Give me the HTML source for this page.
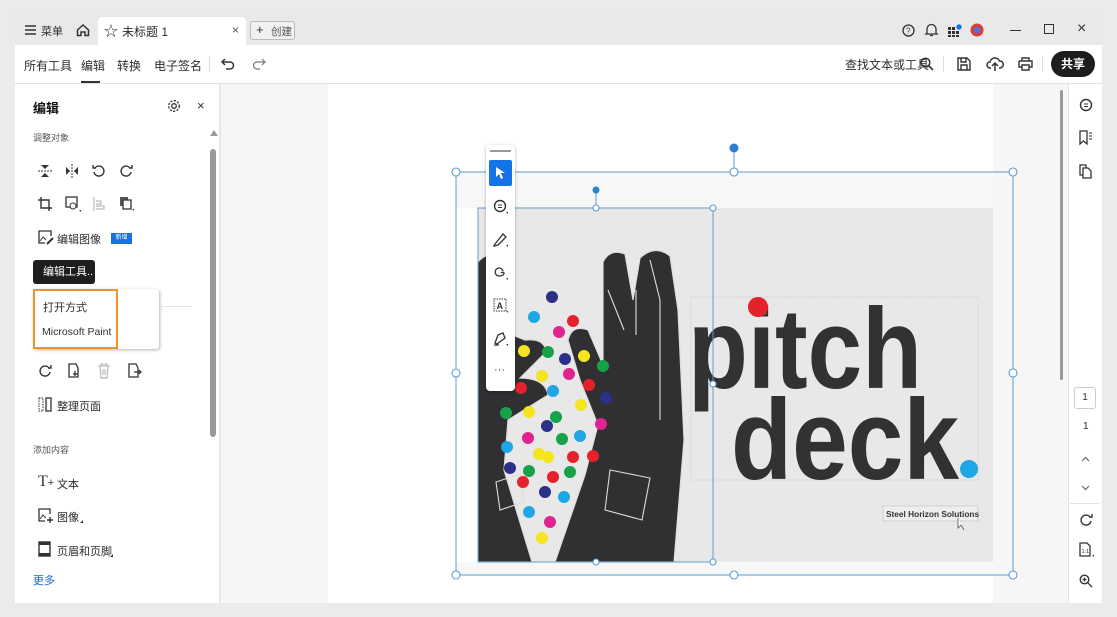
<!DOCTYPE html>
<html><head><meta charset="utf-8"><style>
*{margin:0;padding:0;box-sizing:border-box}
body{width:1117px;height:617px;background:#ebebeb;position:relative;overflow:hidden;font-family:"Liberation Sans","Noto Sans CJK SC",sans-serif;color:#222}
.a{position:absolute}
.t{font-size:11.5px;color:#2c2c2c;white-space:nowrap}
svg{position:absolute;overflow:visible}
</style></head><body>
<div class="a" style="left:15px;top:15px;width:1087px;height:30px;background:#e9e9e9"></div>
<div class="a" style="left:98px;top:17px;width:148px;height:28px;background:#fff;border-radius:4px 4px 0 0"></div>
<svg style="left:25px;top:25px" width="12" height="10"><path d="M0 1H11M0 5H11M0 9H11" stroke="#333" stroke-width="1.4"/></svg>
<div class="a t" style="left:41px;top:23px;font-size:11px">菜单</div>
<svg style="left:76px;top:23px" width="14" height="14"><path d="M1.5 7L7 2L12.5 7V12.5H9V9H5V12.5H1.5Z" fill="none" stroke="#333" stroke-width="1.5"/></svg>
<div class="a" style="left:104px;top:21px;font-size:14px;color:#333">☆</div>
<div class="a t" style="left:122px;top:23px;font-size:12px">未标题 1</div>
<div class="a t" style="left:232px;top:23px;font-size:12px;color:#555">×</div>
<div class="a" style="left:250px;top:21px;width:45px;height:19px;border:1px solid #bbb;border-radius:3px;background:#f1f1f1"></div>
<div class="a t" style="left:256px;top:22px;font-size:13px;color:#333">+</div>
<div class="a t" style="left:271px;top:24px;font-size:10.5px;color:#555">创建</div>
<svg style="left:902px;top:24px" width="13" height="13"><circle cx="6.5" cy="6.5" r="5.5" fill="none" stroke="#333" stroke-width="1.3"/><text x="4" y="9.5" font-size="8" font-family="Liberation Sans" fill="#333">?</text></svg>
<svg style="left:925px;top:23px" width="13" height="14"><path d="M2 10V6a4.5 4.5 0 0 1 9 0v4l1 1H1Z M5 12.5h3" fill="none" stroke="#333" stroke-width="1.3"/></svg>
<svg style="left:948px;top:24px" width="14" height="13"><g fill="#333"><rect x="0" y="3" width="3" height="3"/><rect x="4" y="3" width="3" height="3"/><rect x="0" y="7" width="3" height="3"/><rect x="4" y="7" width="3" height="3"/><rect x="8" y="7" width="3" height="3"/><rect x="0" y="11" width="3" height="2"/><rect x="4" y="11" width="3" height="2"/><rect x="8" y="11" width="3" height="2"/></g><circle cx="11" cy="3" r="2.7" fill="#1473e6"/></svg>
<svg style="left:970px;top:23px" width="14" height="14"><circle cx="7" cy="7" r="6.5" fill="#e03b2e"/><circle cx="7" cy="7" r="3.5" fill="#5a6fd6"/></svg>
<div class="a" style="left:1010px;top:30px;width:11px;height:1.3px;background:#333"></div>
<div class="a" style="left:1044px;top:24px;width:10px;height:10px;border:1.3px solid #333"></div>
<div class="a t" style="left:1077px;top:20px;font-size:16px;color:#333">×</div>
<div class="a" style="left:15px;top:45px;width:1087px;height:39px;background:#fff;border-bottom:1px solid #e2e2e2"></div>
<div class="a t" style="left:24px;top:57px;font-size:12px">所有工具</div>
<div class="a t" style="left:81px;top:57px;font-size:12px">编辑</div>
<div class="a" style="left:81px;top:81px;width:19px;height:2px;background:#333"></div>
<div class="a t" style="left:117px;top:57px;font-size:12px">转换</div>
<div class="a t" style="left:154px;top:57px;font-size:12px">电子签名</div>
<div class="a" style="left:209px;top:56px;width:1px;height:16px;background:#ddd"></div>
<svg style="left:221px;top:58px" width="14" height="11"><path d="M4 1L1 4L4 7M1 4H9a3.5 3.5 0 0 1 0 7H5" fill="none" stroke="#333" stroke-width="1.5"/></svg>
<svg style="left:252px;top:58px" width="14" height="11"><path d="M10 1L13 4L10 7M13 4H5a3.5 3.5 0 0 0 0 7H8" fill="none" stroke="#777" stroke-width="1.2"/></svg>
<div class="a t" style="left:845px;top:56px;font-size:12px">查找文本或工具</div>
<svg style="left:920px;top:57px" width="14" height="14"><circle cx="5.5" cy="5.5" r="4.3" fill="none" stroke="#333" stroke-width="1.5"/><path d="M8.7 8.7L13 13" stroke="#333" stroke-width="1.6"/></svg>
<div class="a" style="left:943px;top:56px;width:1px;height:16px;background:#ddd"></div>
<svg style="left:957px;top:57px" width="14" height="14"><path d="M1 1H10L13 4V13H1Z M4 1V5H9V1 M4 13V8H10V13" fill="none" stroke="#333" stroke-width="1.4"/></svg>
<svg style="left:987px;top:56px" width="16" height="16"><path d="M4 12H3a3 3 0 0 1 0-6a5 5 0 0 1 9.5-1a3.5 3.5 0 0 1 0.5 7H12 M8 15V7M5 10L8 7L11 10" fill="none" stroke="#333" stroke-width="1.5"/></svg>
<svg style="left:1018px;top:57px" width="15" height="14"><path d="M4 4V1H11V4 M1 4H14V10H11 M4 10H1V4 M4 8H11V13H4Z" fill="none" stroke="#333" stroke-width="1.4"/></svg>
<div class="a" style="left:1042px;top:56px;width:1px;height:16px;background:#ddd"></div>
<div class="a" style="left:1051px;top:51px;width:44px;height:26px;background:#1d1d1d;border-radius:13px;color:#fff;font-size:12px;font-weight:bold;text-align:center;line-height:26px">共享</div>
<div class="a" style="left:15px;top:84px;width:205px;height:519px;background:#fff;border-right:1px solid #e4e4e4"></div>
<div class="a t" style="left:33px;top:98px;font-size:13px;font-weight:bold;color:#111">编辑</div>
<svg style="left:167px;top:99px" width="14" height="14"><circle cx="7" cy="7" r="2.3" fill="none" stroke="#333" stroke-width="1.3"/><circle cx="7" cy="7" r="5.3" fill="none" stroke="#333" stroke-width="1.3" stroke-dasharray="2.2 1.3"/></svg>
<div class="a t" style="left:197px;top:98px;font-size:13px;color:#333">×</div>
<div class="a t" style="left:33px;top:131px;font-size:9px;color:#555">调整对象</div>
<div class="a" style="left:210px;top:130px;width:0;height:0;border-left:4px solid transparent;border-right:4px solid transparent;border-bottom:6px solid #999"></div>
<div class="a" style="left:210px;top:149px;width:6px;height:288px;background:#999;border-radius:3px"></div>
<svg style="left:38px;top:164px" width="14" height="14"><path d="M3 1H11L7 5Z M3 13H11L7 9Z" fill="#333"/><path d="M0 7H14" stroke="#333" stroke-dasharray="2 1"/></svg>
<svg style="left:65px;top:164px" width="14" height="14"><path d="M1 3V11L5 7Z M13 3V11L9 7Z" fill="#333"/><path d="M7 0V14" stroke="#333" stroke-dasharray="2 1"/></svg>
<svg style="left:92px;top:164px" width="14" height="14"><path d="M3 4A5 5 0 1 1 2 8 M1 1V4H4" fill="none" stroke="#333" stroke-width="1.4"/></svg>
<svg style="left:119px;top:164px" width="14" height="14"><path d="M11 4A5 5 0 1 0 12 8 M13 1V4H10" fill="none" stroke="#333" stroke-width="1.4"/></svg>
<svg style="left:38px;top:197px" width="14" height="14"><path d="M3 0V11H14 M0 3H11V14" fill="none" stroke="#333" stroke-width="1.4"/></svg>
<svg style="left:65px;top:196px" width="16" height="16"><rect x="1" y="1" width="11" height="10" fill="none" stroke="#333" stroke-width="1.3"/><circle cx="8" cy="10" r="3" fill="#fff" stroke="#333"/><path d="M14 14h2v2z" fill="#333"/></svg>
<svg style="left:93px;top:197px" width="16" height="16"><path d="M1 0V14 M3 4H8V7H3 M3 9H11V12H3" fill="none" stroke="#bbb" stroke-width="1.2"/></svg>
<svg style="left:119px;top:196px" width="16" height="16"><rect x="1" y="1" width="8" height="9" fill="#555"/><rect x="4" y="4" width="8" height="9" fill="#fff" stroke="#333" stroke-width="1.3"/><path d="M13 13h2v2z" fill="#333"/></svg>
<svg style="left:38px;top:230px" width="16" height="15"><path d="M13 6V1H1V13H7" fill="none" stroke="#333" stroke-width="1.3"/><path d="M2 11L5 7L8 10" fill="none" stroke="#333"/><path d="M9 14L15 8" stroke="#333" stroke-width="2"/></svg>
<div class="a t" style="left:57px;top:231px;font-size:11px">编辑图像</div>
<div class="a" style="left:111px;top:233px;width:21px;height:11px;background:#1473e6;color:#fff;font-size:6px;line-height:11px;text-align:center">新增</div>
<div class="a" style="left:33px;top:260px;width:62px;height:24px;background:#1e1e1e;border-radius:3px;color:#fff;font-size:11px;line-height:24px;padding-left:10px">编辑工具..</div>
<div class="a" style="left:33px;top:289px;width:126px;height:60px;background:#fff;border-radius:3px;box-shadow:1px 1px 3px rgba(0,0,0,.3)"></div>
<div class="a" style="left:33px;top:289px;width:85px;height:60px;border:2.5px solid #f0922b"></div>
<div class="a t" style="left:43px;top:299px;font-size:11px">打开方式</div>
<div class="a t" style="left:42px;top:326px;font-size:10.5px;color:#333">Microsoft Paint</div>
<div class="a" style="left:159px;top:306px;width:33px;height:1px;background:#e4e4e4"></div>
<svg style="left:38px;top:364px" width="14" height="14"><path d="M11 4A5 5 0 1 0 12 8 M13 1V4H10" fill="none" stroke="#333" stroke-width="1.4"/></svg>
<svg style="left:68px;top:363px" width="14" height="16"><path d="M8 1H1V14H10V5Z" fill="none" stroke="#333" stroke-width="1.3"/><path d="M7 8V13M5 11H10" stroke="#333" stroke-width="1.3"/></svg>
<svg style="left:97px;top:363px" width="14" height="16"><path d="M1 3H13M4 3V1H10V3M3 3L4 15H10L11 3M6 6V12M8 6V12" fill="none" stroke="#bbb" stroke-width="1.2"/></svg>
<svg style="left:128px;top:363px" width="14" height="16"><path d="M8 1H1V14H10V5Z" fill="none" stroke="#333" stroke-width="1.3"/><path d="M6 9H13M11 7L13 9L11 11" fill="none" stroke="#333" stroke-width="1.2"/></svg>
<svg style="left:38px;top:397px" width="14" height="15"><path d="M1 1H5V14H1Z" fill="none" stroke="#333" stroke-dasharray="1.5 1"/><rect x="8" y="1" width="5" height="13" fill="none" stroke="#333" stroke-width="1.3"/></svg>
<div class="a t" style="left:57px;top:398px;font-size:11px">整理页面</div>
<div class="a t" style="left:33px;top:443px;font-size:9px;color:#555">添加内容</div>
<div class="a t" style="left:38px;top:473px;font-size:16px;font-family:'Liberation Serif',serif;color:#333">T<span style="font-size:11px;font-family:'Liberation Sans'">+</span></div>
<div class="a t" style="left:57px;top:476px;font-size:11px">文本</div>
<svg style="left:38px;top:508px" width="16" height="16"><path d="M12 6V1H1V13H7" fill="none" stroke="#333" stroke-width="1.3"/><path d="M2 11L5 7L8 10" fill="none" stroke="#333"/><path d="M12 9V15M9 12H15" stroke="#333" stroke-width="1.4"/></svg>
<div class="a t" style="left:57px;top:509px;font-size:11px">图像</div>
<div class="a" style="left:80px;top:520px;border-left:3px solid transparent;border-bottom:3px solid #333"></div>
<svg style="left:38px;top:541px" width="13" height="16"><rect x="1" y="1" width="11" height="14" fill="none" stroke="#333" stroke-width="1.4"/><rect x="1" y="1" width="11" height="3" fill="#333"/><rect x="1" y="12" width="11" height="3" fill="#333"/></svg>
<div class="a t" style="left:57px;top:543px;font-size:11px">页眉和页脚</div>
<div class="a" style="left:110px;top:554px;border-left:3px solid transparent;border-bottom:3px solid #333"></div>
<div class="a t" style="left:33px;top:572px;font-size:11px;color:#1a63c9">更多</div>
<div class="a" style="left:221px;top:84px;width:107px;height:519px;background:#f6f6f6"></div>
<div class="a" style="left:328px;top:84px;width:665px;height:519px;background:#fff"></div>
<div class="a" style="left:993px;top:84px;width:75px;height:519px;background:#f6f6f6"></div>
<div class="a" style="left:1060px;top:90px;width:3px;height:290px;background:#999;border-radius:2px"></div>
<div class="a" style="left:1068px;top:84px;width:34px;height:519px;background:#fff;border-left:1px solid #e4e4e4"></div>
<div class="a" style="left:456px;top:172px;width:537px;height:36px;background:#f7f7f7"></div>
<div class="a" style="left:478px;top:208px;width:515px;height:354px;background:#e8e8e8"></div>
<div class="a" style="left:456px;top:562px;width:537px;height:13px;background:#f7f7f7"></div>
<svg style="left:0;top:0" width="1117" height="617">
<g fill="#303033" stroke="#ddd" stroke-width="1.2">
<path d="M555,562 L585,475 L598,425 L580,380 L568,340 Q572,324 588,330 L603,365 L603,262 Q610,248 625,254 L633,300 L640,258 Q655,244 670,256 L678,310 L684,440 L674,562 Z"/>
<path d="M478,262 Q488,250 495,262 L500,330 L525,340 Q545,338 546,352 L520,378 Q545,378 548,395 L508,420 L504,470 L532,562 L478,562 Z"/>
</g>
<g fill="none" stroke="#ddd" stroke-width="1.1">
<path d="M610,470 L650,478 L642,520 L605,510 Z M636,290 L636,335 M608,290 L624,330 M496,482 L520,474 L524,502 L500,510Z M650,260 L660,300 L660,420"/>
</g>
<g>
<circle cx="552" cy="297" r="6" fill="#2b3088"/><circle cx="534" cy="317" r="6" fill="#1ea7e4"/><circle cx="573" cy="321" r="6" fill="#e5212a"/><circle cx="559" cy="332" r="6" fill="#e0248f"/><circle cx="524" cy="351" r="6" fill="#f5e51f"/><circle cx="548" cy="352" r="6" fill="#17a24a"/><circle cx="565" cy="359" r="6" fill="#2b3088"/><circle cx="584" cy="356" r="6" fill="#f5e51f"/><circle cx="603" cy="366" r="6" fill="#17a24a"/><circle cx="542" cy="376" r="6" fill="#f5e51f"/><circle cx="569" cy="374" r="6" fill="#e0248f"/><circle cx="521" cy="388" r="6" fill="#e5212a"/><circle cx="553" cy="391" r="6" fill="#1ea7e4"/><circle cx="589" cy="385" r="6" fill="#e5212a"/><circle cx="606" cy="398" r="6" fill="#2b3088"/><circle cx="506" cy="413" r="6" fill="#17a24a"/><circle cx="529" cy="412" r="6" fill="#f5e51f"/><circle cx="556" cy="417" r="6" fill="#17a24a"/><circle cx="581" cy="405" r="6" fill="#f5e51f"/><circle cx="547" cy="426" r="6" fill="#2b3088"/><circle cx="601" cy="424" r="6" fill="#e0248f"/><circle cx="528" cy="438" r="6" fill="#e0248f"/><circle cx="562" cy="439" r="6" fill="#17a24a"/><circle cx="580" cy="436" r="6" fill="#1ea7e4"/><circle cx="507" cy="447" r="6" fill="#1ea7e4"/><circle cx="539" cy="454" r="6" fill="#f5e51f"/><circle cx="548" cy="457" r="6" fill="#f5e51f"/><circle cx="573" cy="457" r="6" fill="#e5212a"/><circle cx="593" cy="456" r="6" fill="#e5212a"/><circle cx="510" cy="468" r="6" fill="#2b3088"/><circle cx="529" cy="471" r="6" fill="#17a24a"/><circle cx="553" cy="477" r="6" fill="#e5212a"/><circle cx="570" cy="472" r="6" fill="#17a24a"/><circle cx="523" cy="482" r="6" fill="#e5212a"/><circle cx="545" cy="492" r="6" fill="#2b3088"/><circle cx="564" cy="497" r="6" fill="#1ea7e4"/><circle cx="529" cy="512" r="6" fill="#1ea7e4"/><circle cx="550" cy="522" r="6" fill="#e0248f"/><circle cx="542" cy="538" r="6" fill="#f5e51f"/>
</g>
<rect x="691" y="297" width="287" height="183" fill="none" stroke="#d4d4d4" stroke-dasharray="2 1"/>
<text x="688" y="388" font-family="Liberation Sans" font-weight="bold" font-size="114" fill="#323235" textLength="234" lengthAdjust="spacingAndGlyphs">pitch</text>
<text x="731" y="479" font-family="Liberation Sans" font-weight="bold" font-size="114" fill="#323235" textLength="228" lengthAdjust="spacingAndGlyphs">deck</text>
<rect x="750" y="298" width="16" height="16" fill="#e8e8e8"/>
<circle cx="758" cy="307" r="10" fill="#e5212a"/>
<circle cx="969" cy="469" r="9" fill="#1ea7e4"/>
<rect x="883" y="506" width="95" height="15" fill="#eee" stroke="#d0d0d0"/>
<text x="886" y="517" font-family="Liberation Sans" font-weight="bold" font-size="8.3" fill="#333">Steel Horizon Solutions</text>
<g fill="none" stroke="#5b9bd5" stroke-width="1">
<rect x="456" y="172" width="557" height="403"/>
<rect x="478" y="208" width="235" height="354"/>
<path d="M734,152V172 M596,192V208"/>
</g>
<g fill="#fff" stroke="#5b9bd5" stroke-width="1.1">
<circle cx="456" cy="172" r="4"/><circle cx="734" cy="172" r="4"/><circle cx="1013" cy="172" r="4"/><circle cx="456" cy="373" r="4"/><circle cx="1013" cy="373" r="4"/><circle cx="456" cy="575" r="4"/><circle cx="734" cy="575" r="4"/><circle cx="1013" cy="575" r="4"/>
<circle cx="596" cy="208" r="3"/><circle cx="713" cy="208" r="3"/><circle cx="713" cy="384" r="3"/><circle cx="713" cy="562" r="3"/><circle cx="596" cy="562" r="3"/>
</g>
<circle cx="734" cy="148" r="4.5" fill="#2f7fd1"/><circle cx="596" cy="190" r="3.5" fill="#2f7fd1"/>
<path d="M958,518L958,528L961,525L964,530" fill="#fff" stroke="#555" stroke-width=".8"/>
</svg>
<div class="a" style="left:486px;top:145px;width:29px;height:246px;background:#fff;border-radius:4px;box-shadow:0 1px 3px rgba(0,0,0,.3)"></div>
<div class="a" style="left:490px;top:150px;width:21px;height:2px;background:#999"></div>
<div class="a" style="left:489px;top:160px;width:23px;height:26px;background:#1473e6;border-radius:2px"></div>
<svg style="left:495px;top:166px" width="12" height="14"><path d="M1 1V11L4 8L6 13L8 12L6 7H10Z" fill="#fff"/></svg>
<svg style="left:493px;top:199px" width="16" height="16"><circle cx="7" cy="7" r="5.5" fill="none" stroke="#333" stroke-width="1.4"/><path d="M5 6H9M5 8.5H9" stroke="#333"/><path d="M13 13h2v2z" fill="#333"/></svg>
<svg style="left:493px;top:232px" width="16" height="16"><path d="M2 12L10 2L13 5L5 13L1 14Z" fill="none" stroke="#333" stroke-width="1.3"/><path d="M13 13h2v2z" fill="#333"/></svg>
<svg style="left:493px;top:265px" width="16" height="16"><path d="M10 6a4 4 0 1 0-4 5c3 0 5-1 5-3c0-1-2-1-3 0" fill="none" stroke="#333" stroke-width="1.3"/><path d="M13 13h2v2z" fill="#333"/></svg>
<svg style="left:493px;top:298px" width="16" height="16"><rect x="1" y="1" width="12" height="12" fill="none" stroke="#333" stroke-dasharray="1.5 1"/><text x="3.5" y="11" font-size="9" font-family="Liberation Sans" font-weight="bold" fill="#333">A</text><path d="M13 13h2v2z" fill="#333"/></svg>
<svg style="left:493px;top:331px" width="16" height="16"><path d="M2 12L5 4L10 2L12 7L4 13Z M1 14H6" fill="none" stroke="#333" stroke-width="1.3"/><path d="M13 13h2v2z" fill="#333"/></svg>
<div class="a t" style="left:494px;top:364px;font-size:11px;color:#333">···</div>
<svg style="left:1079px;top:98px" width="14" height="14"><circle cx="7" cy="7" r="5.5" fill="none" stroke="#333" stroke-width="1.4"/><path d="M5 6H9M5 8.5H9" stroke="#333"/></svg>
<svg style="left:1079px;top:130px" width="14" height="15"><path d="M1 1H8V14L4.5 11L1 14Z" fill="none" stroke="#333" stroke-width="1.3"/><path d="M10 3H13M10 6H13M10 9H13" stroke="#333"/></svg>
<svg style="left:1079px;top:164px" width="14" height="15"><path d="M1 1H7V11H1Z" fill="none" stroke="#333" stroke-width="1.3"/><path d="M4 4H9L12 7V14H4Z" fill="#fff" stroke="#333" stroke-width="1.3"/></svg>
<div class="a" style="left:1074px;top:387px;width:22px;height:22px;border:1px solid #ccc;border-radius:3px;font-size:10px;text-align:center;line-height:20px;color:#333">1</div>
<div class="a t" style="left:1083px;top:421px;font-size:10px">1</div>
<svg style="left:1081px;top:456px" width="9" height="6"><path d="M1 5L4.5 1.5L8 5" fill="none" stroke="#666" stroke-width="1.2"/></svg>
<svg style="left:1081px;top:485px" width="9" height="6"><path d="M1 1L4.5 4.5L8 1" fill="none" stroke="#666" stroke-width="1.2"/></svg>
<div class="a" style="left:1070px;top:503px;width:30px;height:1px;background:#e4e4e4"></div>
<svg style="left:1079px;top:513px" width="14" height="14"><path d="M11 4A5 5 0 1 0 12 8 M13 1V4H10" fill="none" stroke="#333" stroke-width="1.4"/></svg>
<svg style="left:1079px;top:542px" width="16" height="16"><path d="M8 1H1V14H11V4Z" fill="none" stroke="#333" stroke-width="1.3"/><text x="2.5" y="11" font-size="5.5" font-family="Liberation Sans" fill="#333">1:1</text><path d="M13 13h2v2z" fill="#333"/></svg>
<svg style="left:1079px;top:574px" width="14" height="14"><circle cx="5.5" cy="5.5" r="4.3" fill="none" stroke="#333" stroke-width="1.4"/><path d="M8.7 8.7L13 13M3.5 5.5H7.5M5.5 3.5V7.5" stroke="#333" stroke-width="1.3"/></svg>
</body></html>
